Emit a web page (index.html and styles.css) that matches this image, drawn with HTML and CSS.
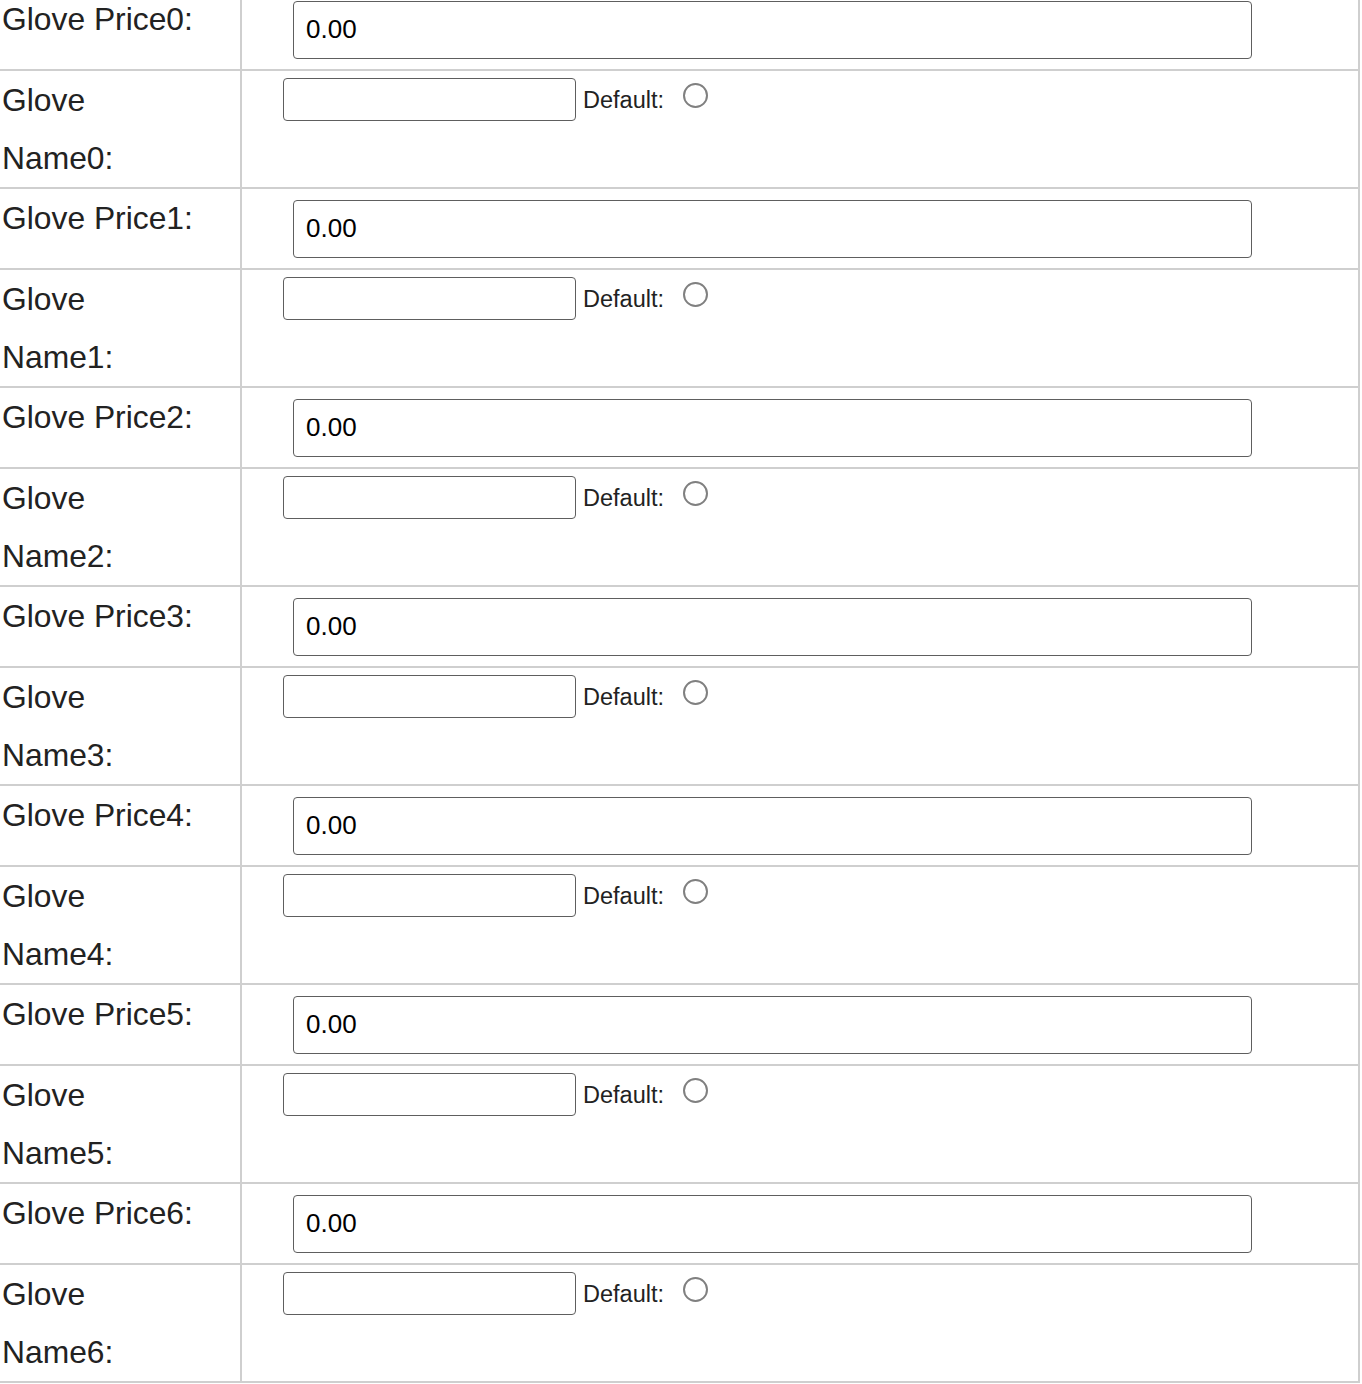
FILE: index.html
```html
<!DOCTYPE html>
<html>
<head>
<meta charset="utf-8">
<link rel="stylesheet" href="styles.css">
</head>
<body>
<div class="form">
  <div class="row price-row"><div class="label">Glove Price0:</div><div class="value"><input class="price" type="text" value="0.00"></div></div>
  <div class="row name-row"><div class="label">Glove Name0:</div><div class="value name-value"><input class="name" type="text"><span class="default">Default:</span><span class="radio"></span></div></div>
  <div class="row price-row"><div class="label">Glove Price1:</div><div class="value"><input class="price" type="text" value="0.00"></div></div>
  <div class="row name-row"><div class="label">Glove Name1:</div><div class="value name-value"><input class="name" type="text"><span class="default">Default:</span><span class="radio"></span></div></div>
  <div class="row price-row"><div class="label">Glove Price2:</div><div class="value"><input class="price" type="text" value="0.00"></div></div>
  <div class="row name-row"><div class="label">Glove Name2:</div><div class="value name-value"><input class="name" type="text"><span class="default">Default:</span><span class="radio"></span></div></div>
  <div class="row price-row"><div class="label">Glove Price3:</div><div class="value"><input class="price" type="text" value="0.00"></div></div>
  <div class="row name-row"><div class="label">Glove Name3:</div><div class="value name-value"><input class="name" type="text"><span class="default">Default:</span><span class="radio"></span></div></div>
  <div class="row price-row"><div class="label">Glove Price4:</div><div class="value"><input class="price" type="text" value="0.00"></div></div>
  <div class="row name-row"><div class="label">Glove Name4:</div><div class="value name-value"><input class="name" type="text"><span class="default">Default:</span><span class="radio"></span></div></div>
  <div class="row price-row"><div class="label">Glove Price5:</div><div class="value"><input class="price" type="text" value="0.00"></div></div>
  <div class="row name-row"><div class="label">Glove Name5:</div><div class="value name-value"><input class="name" type="text"><span class="default">Default:</span><span class="radio"></span></div></div>
  <div class="row price-row"><div class="label">Glove Price6:</div><div class="value"><input class="price" type="text" value="0.00"></div></div>
  <div class="row name-row"><div class="label">Glove Name6:</div><div class="value name-value"><input class="name" type="text"><span class="default">Default:</span><span class="radio"></span></div></div>
</div>
</body>
</html>
```
FILE: styles.css
```css
html, body {
  margin: 0;
  padding: 0;
  background: #fff;
}
body {
  font-family: "Liberation Sans", Arial, sans-serif;
  color: #222;
  overflow: hidden;
}
.form {
  margin-top: -10px;
  width: 1360px;
}
.row {
  display: flex;
  border-bottom: 2px solid #cfcfcf;
}
.price-row {
  height: 79px;
}
.name-row {
  height: 116px;
}
.label {
  box-sizing: border-box;
  width: 242px;
  padding: 0 42px 0 2px;
  border-right: 2px solid #cfcfcf;
  font-size: 31.8px;
  line-height: 58px;
}
.value {
  box-sizing: border-box;
  width: 1118px;
  border-right: 2px solid #cfcfcf;
}
.price {
  box-sizing: border-box;
  display: block;
  margin: 11px 0 0 51px;
  width: 959px;
  height: 58px;
  padding: 0 0 2px 12px;
  border: 1px solid #5e5e5e;
  border-radius: 4px;
  font-family: "Liberation Sans", Arial, sans-serif;
  font-size: 26px;
  color: #000;
  background: #fff;
  outline: none;
}
.name-value {
  display: flex;
  align-items: flex-start;
}
.name {
  box-sizing: border-box;
  margin: 7px 0 0 41px;
  width: 293px;
  height: 43px;
  padding: 0 8px;
  border: 1px solid #5e5e5e;
  border-radius: 4px;
  font-family: "Liberation Sans", Arial, sans-serif;
  font-size: 20px;
  background: #fff;
  outline: none;
}
.default {
  margin: 15px 0 0 7px;
  font-size: 23.5px;
  line-height: 28px;
  color: #222;
}
.radio {
  box-sizing: border-box;
  margin: 12px 0 0 19px;
  width: 25px;
  height: 25px;
  border: 2px solid #808080;
  border-radius: 50%;
  background: #fff;
}
```
